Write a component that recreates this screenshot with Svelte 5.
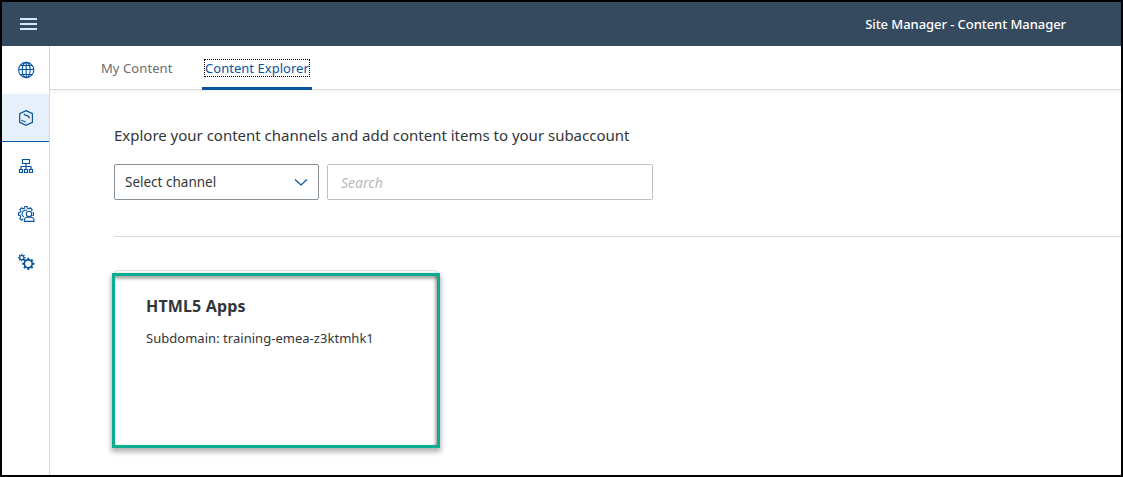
<script>
  const nav = ['globe', 'content', 'hierarchy', 'role', 'settings'];
  const current = 'content';

  // Outline of a cog: teeth alternate between the outer and inner radius.
  function cog(cx, cy, outer, inner, teeth) {
    const step = (Math.PI * 2) / teeth;
    const points = [];
    for (let i = 0; i < teeth; i++) {
      const a = i * step;
      for (const [offset, r] of [[-0.28, inner], [-0.2, outer], [0.2, outer], [0.28, inner]]) {
        const t = a + offset * step;
        points.push(`${(cx + r * Math.cos(t)).toFixed(2)} ${(cy + r * Math.sin(t)).toFixed(2)}`);
      }
    }
    return `M${points.join('L')}Z`;
  }
</script>

<div class="window">
  <header>
    <button class="menu" aria-label="Menu"><i></i><i></i><i></i></button>
    <span class="title">Site Manager - Content Manager</span>
  </header>
  <div class="body">
    <nav>
      {#each nav as item}
        <button class="item" class:active={item === current} aria-label={item}>
          <svg width="18" height="18" viewBox="0 0 18 18">
            {#if item === 'globe'}
              <circle cx="9.2" cy="9" r="7.6" />
              <ellipse cx="9.2" cy="9" rx="4" ry="7.6" />
              <path d="M9.2 1.4v15.2M1.6 8.5h15.2M3 4.5h12.4M3 13.5h12.4" />
            {:else if item === 'content'}
              <path class="bold" d="M9 1.6 15.4 4.6v8.8L9 16.4 2.7 13.4v-8.8Z" />
              <path class="bold" d="M7 4.7Q7.5 6.3 9.2 6.4Q12 6.6 12.4 9.4M4.7 10.9Q5 12 6.2 12Q8.2 12 8.6 13.4" />
            {:else if item === 'hierarchy'}
              <path class="bold" d="M5.5 2.5h7v4h-7zM9 6.5v6M4 12.5V9.5h10v3M2.5 12.5h3v3h-3zM7.5 12.5h3v3h-3zM12.5 12.5h3v3h-3z" />
            {:else if item === 'role'}
              <path d={cog(9, 9, 7.6, 6.1, 8)} />
              <path d="M7 12A3.7 3.7 0 1 1 11 5.8" />
              <path class="mask" d="M8.2 8.7a3.8 3.8 0 1 1 6.4 2.7Q18 12 18 15V18H6.2V15Q6.4 12 9.4 11.4Q8.2 10.4 8.2 8.7Z" />
              <circle cx="12" cy="8.9" r="2.7" />
              <path d="M7.4 16.4v-1.2q0-3 3.2-3h3q3.4 0 3.4 3v1.2z" />
            {:else}
              <path class="filled" fill-rule="evenodd" d="{cog(4.8, 4.6, 3.8, 2.7, 8)}M6.3 4.6a1.5 1.5 0 1 0-3 0a1.5 1.5 0 1 0 3 0Z" />
              <path class="filled" fill-rule="evenodd" d="{cog(11.3, 10.8, 6.2, 4.8, 8)}M14.4 10.8a3.1 3.1 0 1 0-6.2 0a3.1 3.1 0 1 0 6.2 0Z" />
            {/if}
          </svg>
        </button>
      {/each}
    </nav>
    <main>
      <div class="tabs">
        <button class="tab"><span>My Content</span></button>
        <button class="tab selected"><span>Content Explorer</span></button>
      </div>
      <section>
        <p class="intro"><span>Explore your content channels and add content items to your subaccount</span></p>
        <div class="filters">
          <button class="select">
            <span>Select channel</span>
            <svg width="14" height="10" viewBox="0 0 14 10"><path d="M1 2.5l6 5.5L13 2.5" /></svg>
          </button>
          <input placeholder="Search" aria-label="Search" />
        </div>
        <hr />
        <article>
          <div class="highlight"></div>
          <h2><span>HTML5 Apps</span></h2>
          <p class="sub"><span>Subdomain: training-emea-z3ktmhk1</span></p>
        </article>
      </section>
    </main>
  </div>
</div>

<style>
  :global(body) { margin: 0; }
  .window, .window * { box-sizing: border-box; }
  .window {
    width: 1123px; height: 477px; border: 2px solid #000; background: #fff; overflow: hidden;
    display: flex; flex-direction: column;
    font-family: "Noto Sans", "Open Sans", sans-serif; font-size: 13px; color: #32363a;
  }
  button { font: inherit; color: inherit; background: none; border: 0; padding: 0; margin: 0; text-align: left; }
  header {
    height: 44px; flex: none; background: #354a5f; display: flex; align-items: center;
    justify-content: space-between; padding: 0 55px 0 18px;
  }
  .menu { display: flex; flex-direction: column; gap: 3px; }
  .menu i { display: block; width: 17px; height: 2px; background: #d1e8ff; }
  .title { color: #fff; font-weight: 500; line-height: 20px; letter-spacing: -0.06px; white-space: nowrap; }
  .body { display: flex; flex: 1; min-height: 0; }
  nav { width: 48px; flex: none; border-right: 1px solid #d9d9d9; display: flex; flex-direction: column; }
  .item { height: 48px; display: flex; align-items: flex-start; padding: 15px 0 0 15px; border-bottom: 1px solid transparent; }
  .active { background: #e5f0fa; border-bottom-color: #0854a0; }
  svg { display: block; fill: none; stroke: #0854a0; stroke-width: 1.1; }
  .bold { stroke-width: 1.2; }
  .filled { fill: #0854a0; stroke: none; }
  .mask { fill: #fff; stroke: none; }
  main { flex: 1; min-width: 0; display: flex; flex-direction: column; }
  .tabs {
    height: 44px; flex: none; border-bottom: 1px solid #d9d9d9; box-shadow: 0 2px 4px rgba(0, 0, 0, 0.05);
    display: flex; padding-left: 49px; gap: 27px;
  }
  .tab { height: 44px; width: 76px; padding: 13px 2px 0; border-bottom: 3px solid transparent; display: flex; align-items: flex-start; color: #6a6d70; white-space: nowrap; }
  .tab span { line-height: 18px; letter-spacing: 0.08px; }
  .selected { width: 110px; border-bottom-color: #0854a0; border-radius: 2px 2px 0 0; color: #0854a0; }
  .selected span { outline: 1px dotted #000; outline-offset: -1px; width: 106px; padding-left: 1px; letter-spacing: 0.03px; }
  section { padding: 33px 0 0 64px; }
  p, h2 { margin: 0; white-space: nowrap; }
  .intro { font-size: 15px; line-height: 24px; letter-spacing: -0.01px; }
  .filters { display: flex; gap: 8px; margin-top: 17px; }
  .select {
    width: 205px; height: 36px; border: 1px solid #89919a; border-radius: 2px; padding: 0 10px;
    display: flex; align-items: center; justify-content: space-between; font-size: 13.5px;
  }
  .select svg { stroke-width: 1.2; }
  input {
    width: 326px; height: 36px; border: 1px solid #bfbfbf; border-radius: 2px; padding: 0 13px;
    font: italic 14px "Noto Sans", "Open Sans", sans-serif; background: #fff;
  }
  input::placeholder { color: #b8babc; opacity: 1; }
  hr { border: 0; height: 1px; background: #d9d9d9; margin: 36px 0 33px; }
  article {
    position: relative; width: 324px; height: 176px; border: 1px solid #e0e0e0; border-radius: 4px;
    padding: 23px 31px;
  }
  .highlight {
    position: absolute; left: -3px; top: 2px; width: 328px; height: 175px; border: 3px solid #0aad8f;
    box-shadow: 0 3px 5px 1px rgba(0, 0, 0, 0.3), inset 0 4px 3px -1px rgba(0, 0, 0, 0.3), inset -3px 0 3px -1px rgba(0, 0, 0, 0.3);
  }
  h2 { font-size: 16px; line-height: 24px; font-weight: 700; letter-spacing: 0.15px; }
  .sub { line-height: 18px; margin-top: 11px; letter-spacing: 0.03px; }
</style>
